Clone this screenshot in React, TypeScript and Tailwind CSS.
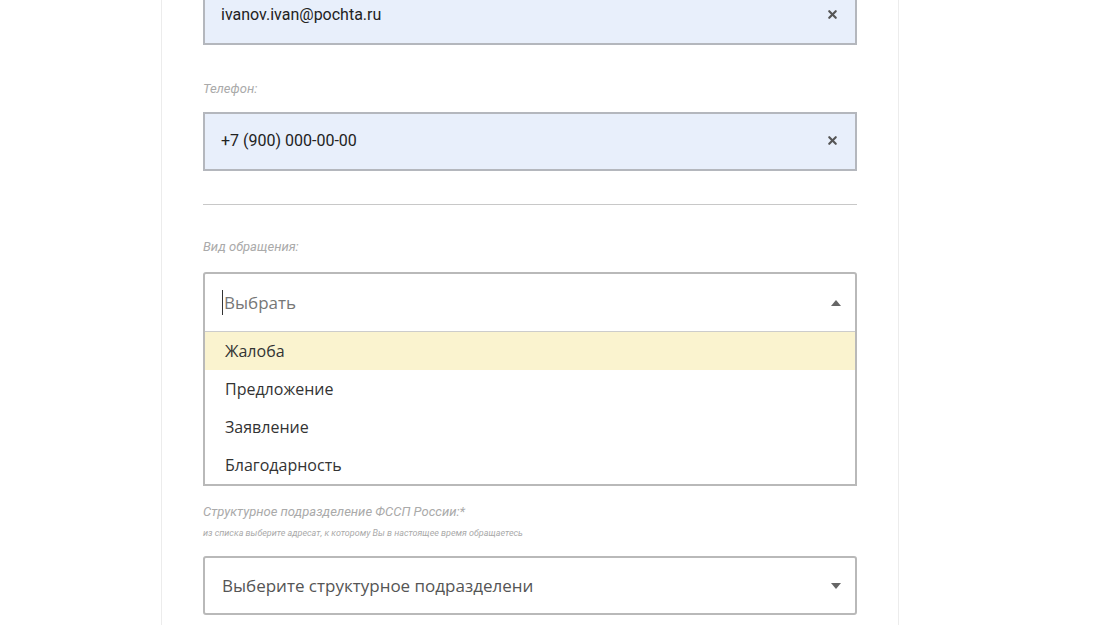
import { X } from "lucide-react";

function Caret({ up }: { up?: boolean }) {
  return (
    <svg width="10" height="6" viewBox="0 0 10 6" className="text-[#666]">
      <path d={up ? "M0 6 L5 0 L10 6 Z" : "M0 0 L5 6 L10 0 Z"} fill="currentColor" />
    </svg>
  );
}

function FilledInput({ value, className = "" }: { value: string; className?: string }) {
  return (
    <div className={`flex h-[59px] items-start justify-between border-2 border-[#b4b7bd] bg-[#e8effb] pl-4 pr-4 pt-[15px] ${className}`}>
      <span className="text-[16px] text-[#222]">{value}</span>
      <X className="mt-[5px] h-[13px] w-[13px] text-[#555]" strokeWidth={4} />
    </div>
  );
}

export default function App() {
  const options = ["Жалоба", "Предложение", "Заявление", "Благодарность"];
  return (
    <div className="h-[641px] overflow-hidden bg-white" style={{ fontFamily: "Roboto, 'Open Sans', sans-serif" }}>
      <div className="ml-[161px] w-[738px] border-x border-[#ececec] px-[41px] h-full">
        <FilledInput value="ivanov.ivan@pochta.ru" className="-mt-[16px] !pt-[17px] h-[61px]" />
        <div className="mt-[34px] text-[13px] italic text-[#aaa]">Телефон:</div>
        <FilledInput value="+7 (900) 000-00-00" className="mt-[13px]" />
        <div className="mt-[33px] h-px bg-[#c8c8c8]" />
        <div className="mt-[32px] text-[13px] italic text-[#aaa]">Вид обращения:</div>
        <div className="mt-[16px] rounded-t-[3px] border-2 border-[#b9b9b9]">
          <div className="flex h-[57px] items-center justify-between pl-[17px] pr-[14px]">
            <span className="border-l border-[#333] pl-[1px] text-[17px] text-[#777]" style={{ fontFamily: "'Open Sans', sans-serif" }}>Выбрать</span>
            <Caret up />
          </div>
          <div className="border-t border-[#ccc]" style={{ fontFamily: "'Open Sans', sans-serif" }}>
            {options.map((o, i) => (
              <div key={o} className={`flex h-[38px] items-center pl-[20px] text-[16px] text-[#333] ${i === 0 ? "bg-[#faf3cf]" : ""}`}>{o}</div>
            ))}
          </div>
        </div>
        <div className="mt-[16px] text-[13px] italic text-[#aaa]">Структурное подразделение ФССП России:*</div>
        <div className="mt-[5px] text-[9px] italic text-[#aaa]">из списка выберите адресат, к которому Вы в настоящее время обращаетесь</div>
        <div className="mt-[16px] flex h-[59px] items-center justify-between rounded-[3px] border-2 border-[#b9b9b9] pl-[17px] pr-[14px]">
          <span className="text-[17px] text-[#555]" style={{ fontFamily: "'Open Sans', sans-serif" }}>Выберите структурное подразделени</span>
          <Caret />
        </div>
      </div>
    </div>
  );
}
